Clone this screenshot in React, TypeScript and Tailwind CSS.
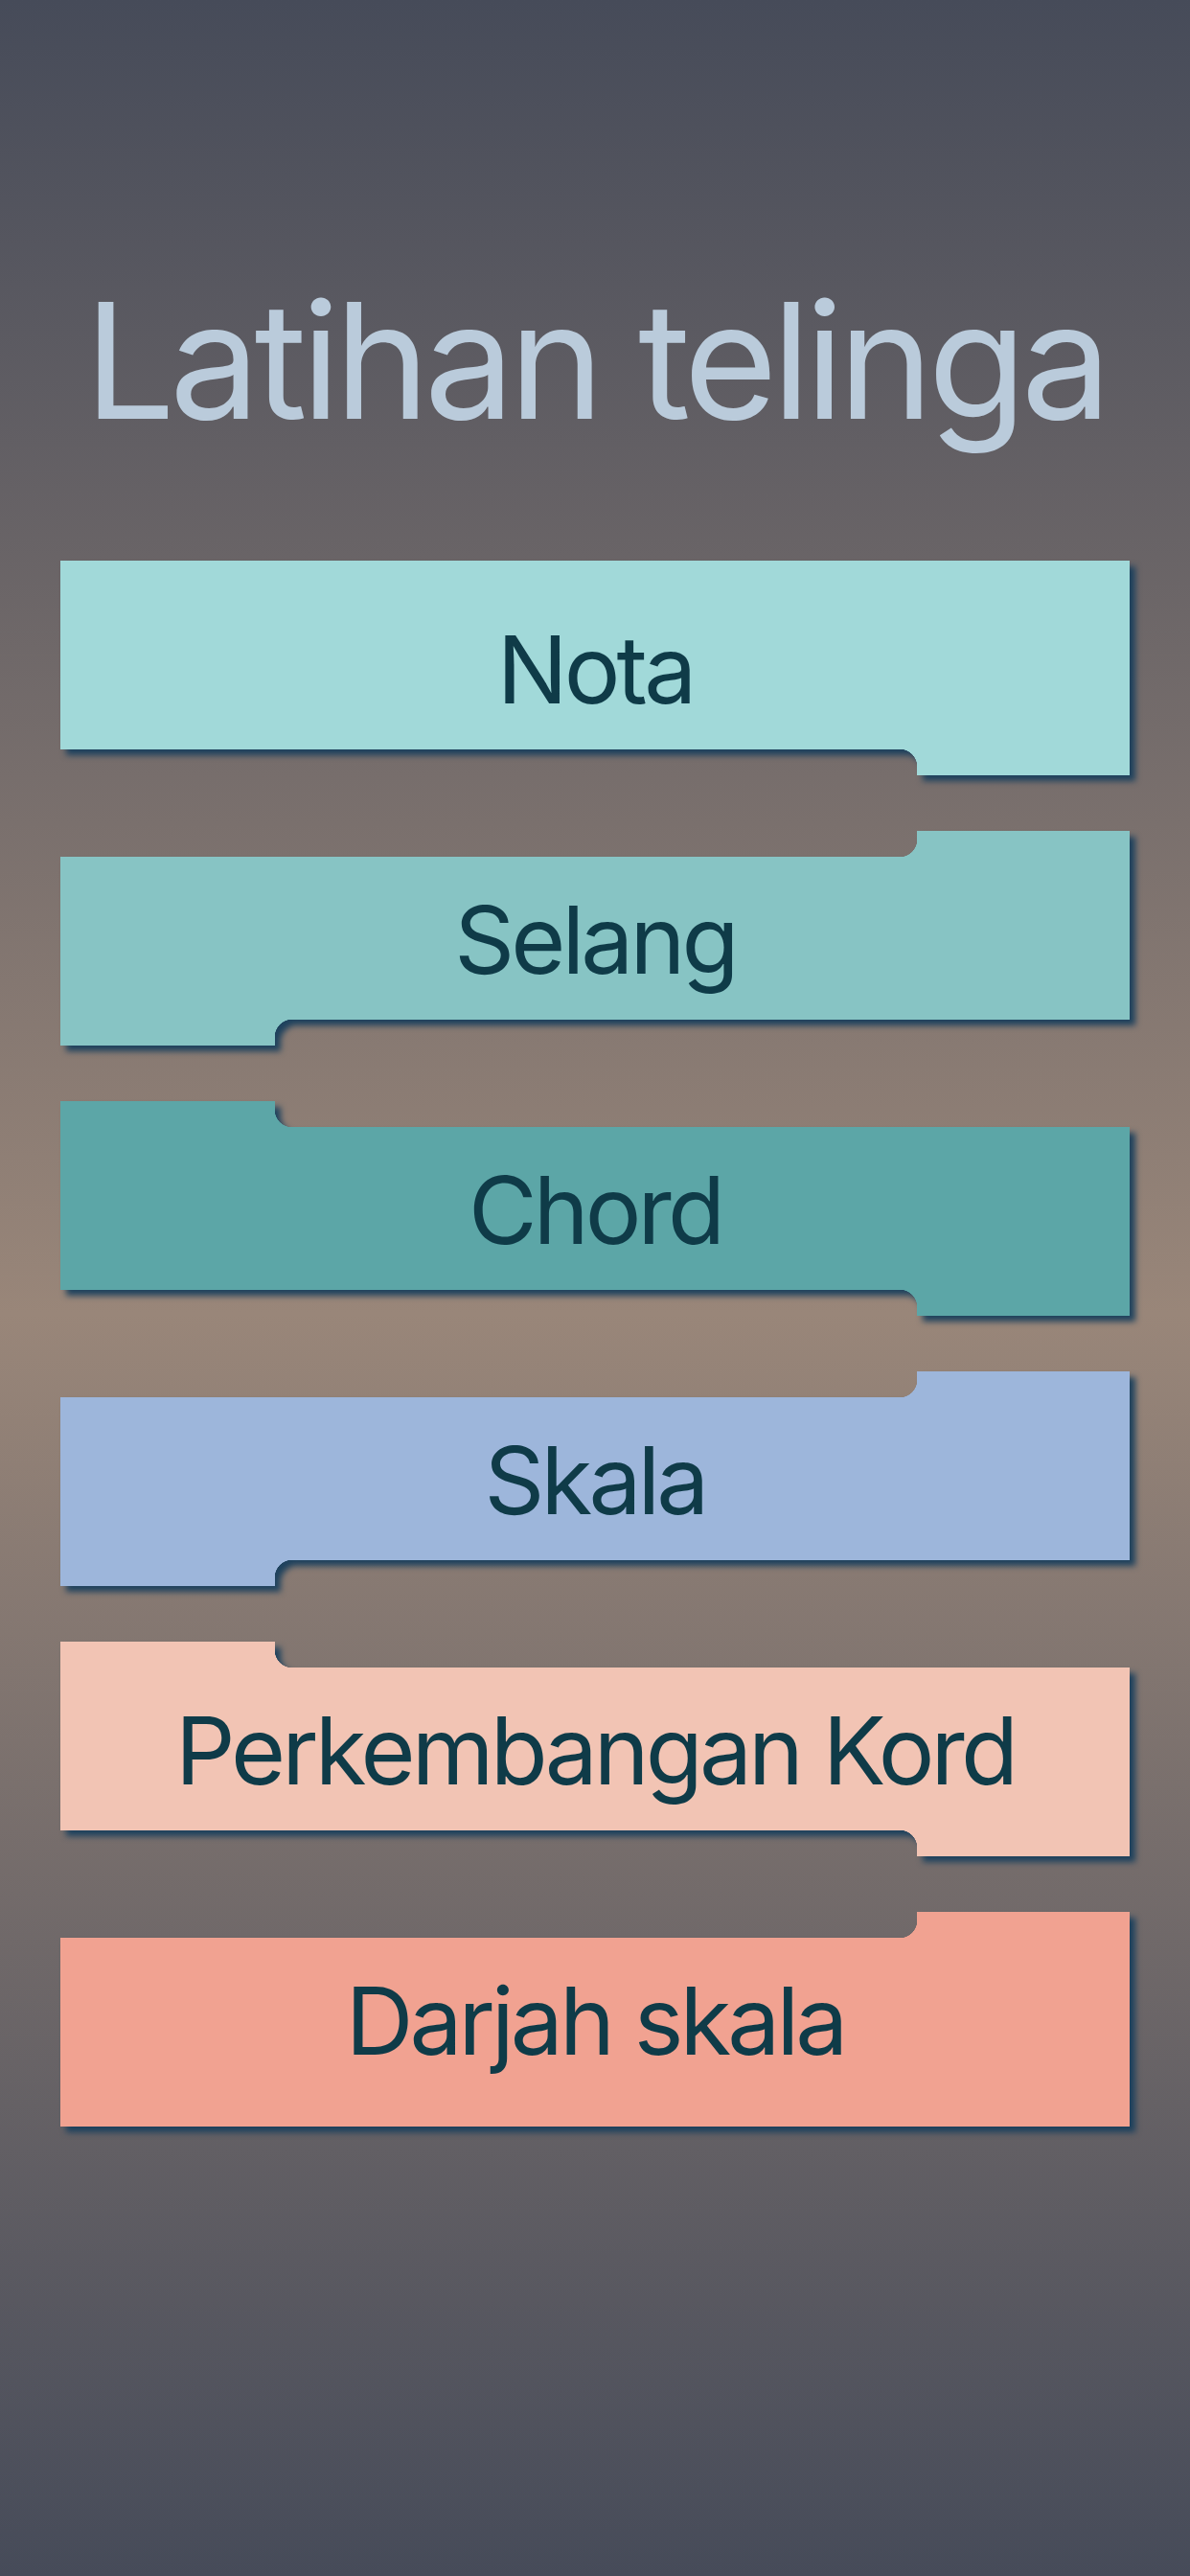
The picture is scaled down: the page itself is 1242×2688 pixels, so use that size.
type Edge = 'full' | 'left' | 'right'

interface Exercise {
  label: string
  bg: string
  top: Edge
  bottom: Edge
}

const exercises: Exercise[] = [
  { label: 'Nota', bg: 'bg-[#a1d9d9]', top: 'full', bottom: 'right' },
  { label: 'Selang', bg: 'bg-[#87c4c4]', top: 'right', bottom: 'left' },
  { label: 'Chord', bg: 'bg-[#5ca6a7]', top: 'left', bottom: 'right' },
  { label: 'Skala', bg: 'bg-[#9db6db]', top: 'right', bottom: 'left' },
  { label: 'Perkembangan Kord', bg: 'bg-[#f2c4b4]', top: 'left', bottom: 'right' },
  { label: 'Darjah skala', bg: 'bg-[#f1a291]', top: 'right', bottom: 'full' },
]

// concave corner where a tab meets the card body
const fillets = {
  'top-left': 'self-end [mask-image:radial-gradient(circle_at_100%_0,transparent_18px,#000_18.5px)]',
  'top-right': 'self-end [mask-image:radial-gradient(circle_at_0_0,transparent_18px,#000_18.5px)]',
  'bottom-left': 'self-start [mask-image:radial-gradient(circle_at_100%_100%,transparent_18px,#000_18.5px)]',
  'bottom-right': 'self-start [mask-image:radial-gradient(circle_at_0_100%,transparent_18px,#000_18.5px)]',
}

function CardEdge({ edge, side, bg }: { edge: Edge; side: 'top' | 'bottom'; bg: string }) {
  if (edge === 'full') return <div className={`h-[27px] ${bg}`} />

  const fillet = <div className={`h-[18px] w-[18px] ${bg} ${fillets[`${side}-${edge}`]}`} />

  if (edge === 'left') {
    return (
      <div className="flex h-[27px]">
        <div className={`w-[224px] ${bg}`} />
        {fillet}
        <div className="flex-1" />
      </div>
    )
  }

  return (
    <div className="flex h-[27px]">
      <div className="flex-1" />
      {fillet}
      <div className={`w-[222px] ${bg}`} />
    </div>
  )
}

function ExerciseCard({ item }: { item: Exercise }) {
  return (
    <button className="grid w-full text-left [filter:drop-shadow(6px_6px_3px_rgba(24,62,92,0.95))]">
      <div className="col-start-1 row-start-1 flex flex-col">
        <CardEdge edge={item.top} side="top" bg={item.bg} />
        <div className={`h-[170px] ${item.bg}`} />
        <CardEdge edge={item.bottom} side="bottom" bg={item.bg} />
      </div>
      <span className="col-start-1 row-start-1 self-center justify-self-center whitespace-nowrap pt-[4px] text-[98px] leading-none tracking-[-0.04em] text-[#0f3b48]">
        {item.label}
      </span>
    </button>
  )
}

export default function App() {
  return (
    <div className="min-h-screen bg-[linear-gradient(180deg,#464b59_0%,#998679_51%,#464b59_100%)] px-[63px] pt-[292px] [font-family:Inter,'Noto_Sans',sans-serif]">
      <h1 className="-mx-[40px] whitespace-nowrap text-center text-[168px] leading-none font-normal tracking-[-0.035em] text-[#bacbdb]">
        Latihan telinga
      </h1>

      <div className="mt-[125px] flex flex-col gap-[58px]">
        {exercises.map((item) => (
          <ExerciseCard key={item.label} item={item} />
        ))}
      </div>
    </div>
  )
}
